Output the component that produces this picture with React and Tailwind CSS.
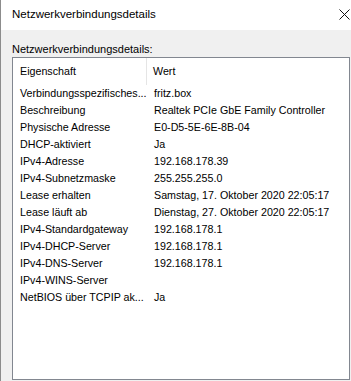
import React from "react";

const rows = [
    ["Verbindungsspezifisches...", "fritz.box"],
    ["Beschreibung", "Realtek PCIe GbE Family Controller"],
    ["Physische Adresse", "E0-D5-5E-6E-8B-04"],
    ["DHCP-aktiviert", "Ja"],
    ["IPv4-Adresse", "192.168.178.39"],
    ["IPv4-Subnetzmaske", "255.255.255.0"],
    ["Lease erhalten", "Samstag, 17. Oktober 2020 22:05:17"],
    ["Lease läuft ab", "Dienstag, 27. Oktober 2020 22:05:17"],
    ["IPv4-Standardgateway", "192.168.178.1"],
    ["IPv4-DHCP-Server", "192.168.178.1"],
    ["IPv4-DNS-Server", "192.168.178.1"],
    ["IPv4-WINS-Server", ""],
    ["NetBIOS über TCPIP ak...", "Ja"],
];

export default function App() {
    return (
        <div
            className="w-[351px] h-[381px] overflow-hidden flex flex-col bg-[#f0f0f0] border-l border-[#8c8c8c] text-[#000]"
            style={{ fontFamily: '"Liberation Sans", Arial, sans-serif' }}
        >
            {/* Titelleiste */}
            <div className="h-[30px] bg-white flex items-center justify-between pl-[11px] pr-[1px] shrink-0">
                <span className="text-[11.5px]">Netzwerkverbindungsdetails</span>
                <svg width="11" height="11" viewBox="0 0 11 11" className="mt-[-2px]">
                    <path d="M0.5 0.5L10.5 10.5M10.5 0.5L0.5 10.5" stroke="#111" strokeWidth="1" fill="none" />
                </svg>
            </div>

            {/* Inhalt */}
            <div className="flex-1 flex flex-col pl-[11px] pt-[12px]">
                <div className="h-[15px] leading-[15px] text-[11px]">Netzwerkverbindungsdetails:</div>

                <div className="w-[338px] h-[323px] bg-white border border-[#828790] text-[10.7px]">
                    {/* Kopfzeile */}
                    <div className="flex h-[27px] items-center">
                        <div className="w-[134px] h-full flex items-center pl-[7px] border-r border-[#e5e5e5]">
                            Eigenschaft
                        </div>
                        <div className="pl-[6px]">Wert</div>
                    </div>

                    {rows.map(([name, value]) => (
                        <div key={name} className="flex h-[17px] items-center">
                            <div className="w-[134px] pl-[7px] whitespace-nowrap overflow-hidden">{name}</div>
                            <div className="pl-[7px] whitespace-nowrap">{value}</div>
                        </div>
                    ))}
                </div>
            </div>
        </div>
    );
}
